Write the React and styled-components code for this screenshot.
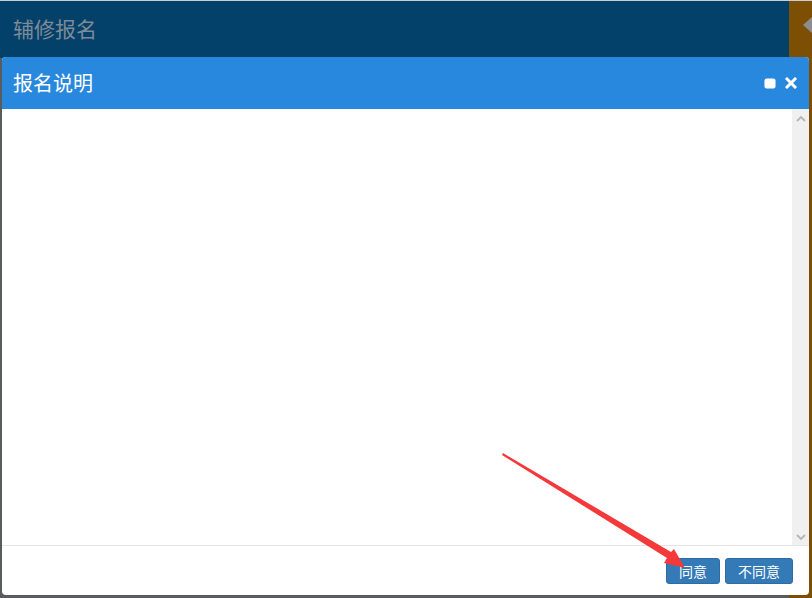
import React from "react";
import styled, { createGlobalStyle } from "styled-components";

const Global = createGlobalStyle`
  html, body { margin: 0; padding: 0; }
  body {
    width: 812px; height: 598px; overflow: hidden;
    font-family: "Noto Sans CJK SC", "Liberation Sans", sans-serif;
    background: #555a5e;
  }
`;

const Page = styled.div`
  position: relative;
  width: 812px;
  height: 598px;
  display: grid;
  grid-template-columns: 1fr 23px;
  grid-template-rows: 57px 1fr;
  border-top: 1px solid #c9ced3;
  box-sizing: border-box;
`;

const TopBar = styled.div`
  background: #03406a;
  display: flex;
  align-items: center;
  padding-left: 13px;
  padding-bottom: 3px;
  color: #7d8a98;
  font-size: 21px;
`;

const SideStrip = styled.div`
  grid-row: 1 / span 2;
  grid-column: 2;
  background: #7c4f05;
  display: flex;
  justify-content: flex-end;
  padding-top: 16px;
`;

const Shade = styled.div`
  background: #585c60;
`;

const Dialog = styled.div`
  position: absolute;
  left: 2px;
  top: 56px;
  width: 807px;
  height: 538px;
  background: #fff;
  border-radius: 4px;
  display: flex;
  flex-direction: column;
  overflow: hidden;
`;

const Header = styled.div`
  height: 52px;
  flex: none;
  background: #2888de;
  display: flex;
  align-items: center;
  padding: 0 11px;
  color: #fff;
  font-size: 20px;
`;

const Title = styled.div`
  flex: 1;
  margin-top: -2px;
`;

const Tools = styled.div`
  display: flex;
  align-items: center;
  gap: 9px;
  margin-right: 1px;
`;

const Body = styled.div`
  flex: 1;
  display: flex;
`;

const Content = styled.div`
  flex: 1;
`;

const Scrollbar = styled.div`
  width: 17px;
  background: #f0f0f0;
  display: flex;
  flex-direction: column;
  justify-content: space-between;
  align-items: center;
  padding: 6px 0 4px;
`;

const Footer = styled.div`
  height: 48px;
  flex: none;
  border-top: 1px solid #e5e5e5;
  display: flex;
  justify-content: flex-end;
  align-items: center;
  gap: 5px;
  padding-right: 16px;
  padding-top: 1px;
`;

const Button = styled.button`
  height: 26px;
  width: ${(p) => p.$w}px;
  padding: 0;
  border: 1px solid #2e6da4;
  border-radius: 3px;
  background: #337ab7;
  color: #fff;
  font-family: "Noto Sans CJK SC", "Liberation Sans", sans-serif;
  font-size: 14px;
  line-height: 1;
`;

const Arrow = styled.svg`
  position: absolute;
  left: 0;
  top: 0;
  pointer-events: none;
`;

const Chevron = ({ up }) => (
  <svg width="10" height="7" viewBox="0 0 10 7">
    <path
      d={up ? "M1 6 L5 2 L9 6" : "M1 1 L5 5 L9 1"}
      fill="none"
      stroke="#b5b5b5"
      strokeWidth="1.8"
    />
  </svg>
);

export default function App() {
  return (
    <>
      <Global />
      <Page>
        <TopBar>辅修报名</TopBar>
        <SideStrip>
          <svg width="10" height="16" viewBox="0 0 10 16">
            <path d="M10 0 L1 8 L10 16 Z" fill="#8d8d8d" />
          </svg>
        </SideStrip>
        <Shade />
        <Dialog>
          <Header>
            <Title>报名说明</Title>
            <Tools>
              <svg width="12" height="11" viewBox="0 0 12 11">
                <rect x="0.5" y="0.5" width="11" height="10" rx="2" fill="#fff" />
              </svg>
              <svg width="12" height="12" viewBox="0 0 12 12">
                <path d="M2 2 L10 10 M10 2 L2 10" stroke="#fff" strokeWidth="3" strokeLinecap="square" />
              </svg>
            </Tools>
          </Header>
          <Body>
            <Content />
            <Scrollbar>
              <Chevron up />
              <Chevron />
            </Scrollbar>
          </Body>
          <Footer>
            <Button $w={54}>同意</Button>
            <Button $w={68}>不同意</Button>
          </Footer>
        </Dialog>
        <Arrow width="812" height="598" viewBox="0 0 812 598">
          <polygon points="503,452 671,551 674,548 685,567 664,562 667,557 502,454" fill="#f5393a" />
        </Arrow>
      </Page>
    </>
  );
}
